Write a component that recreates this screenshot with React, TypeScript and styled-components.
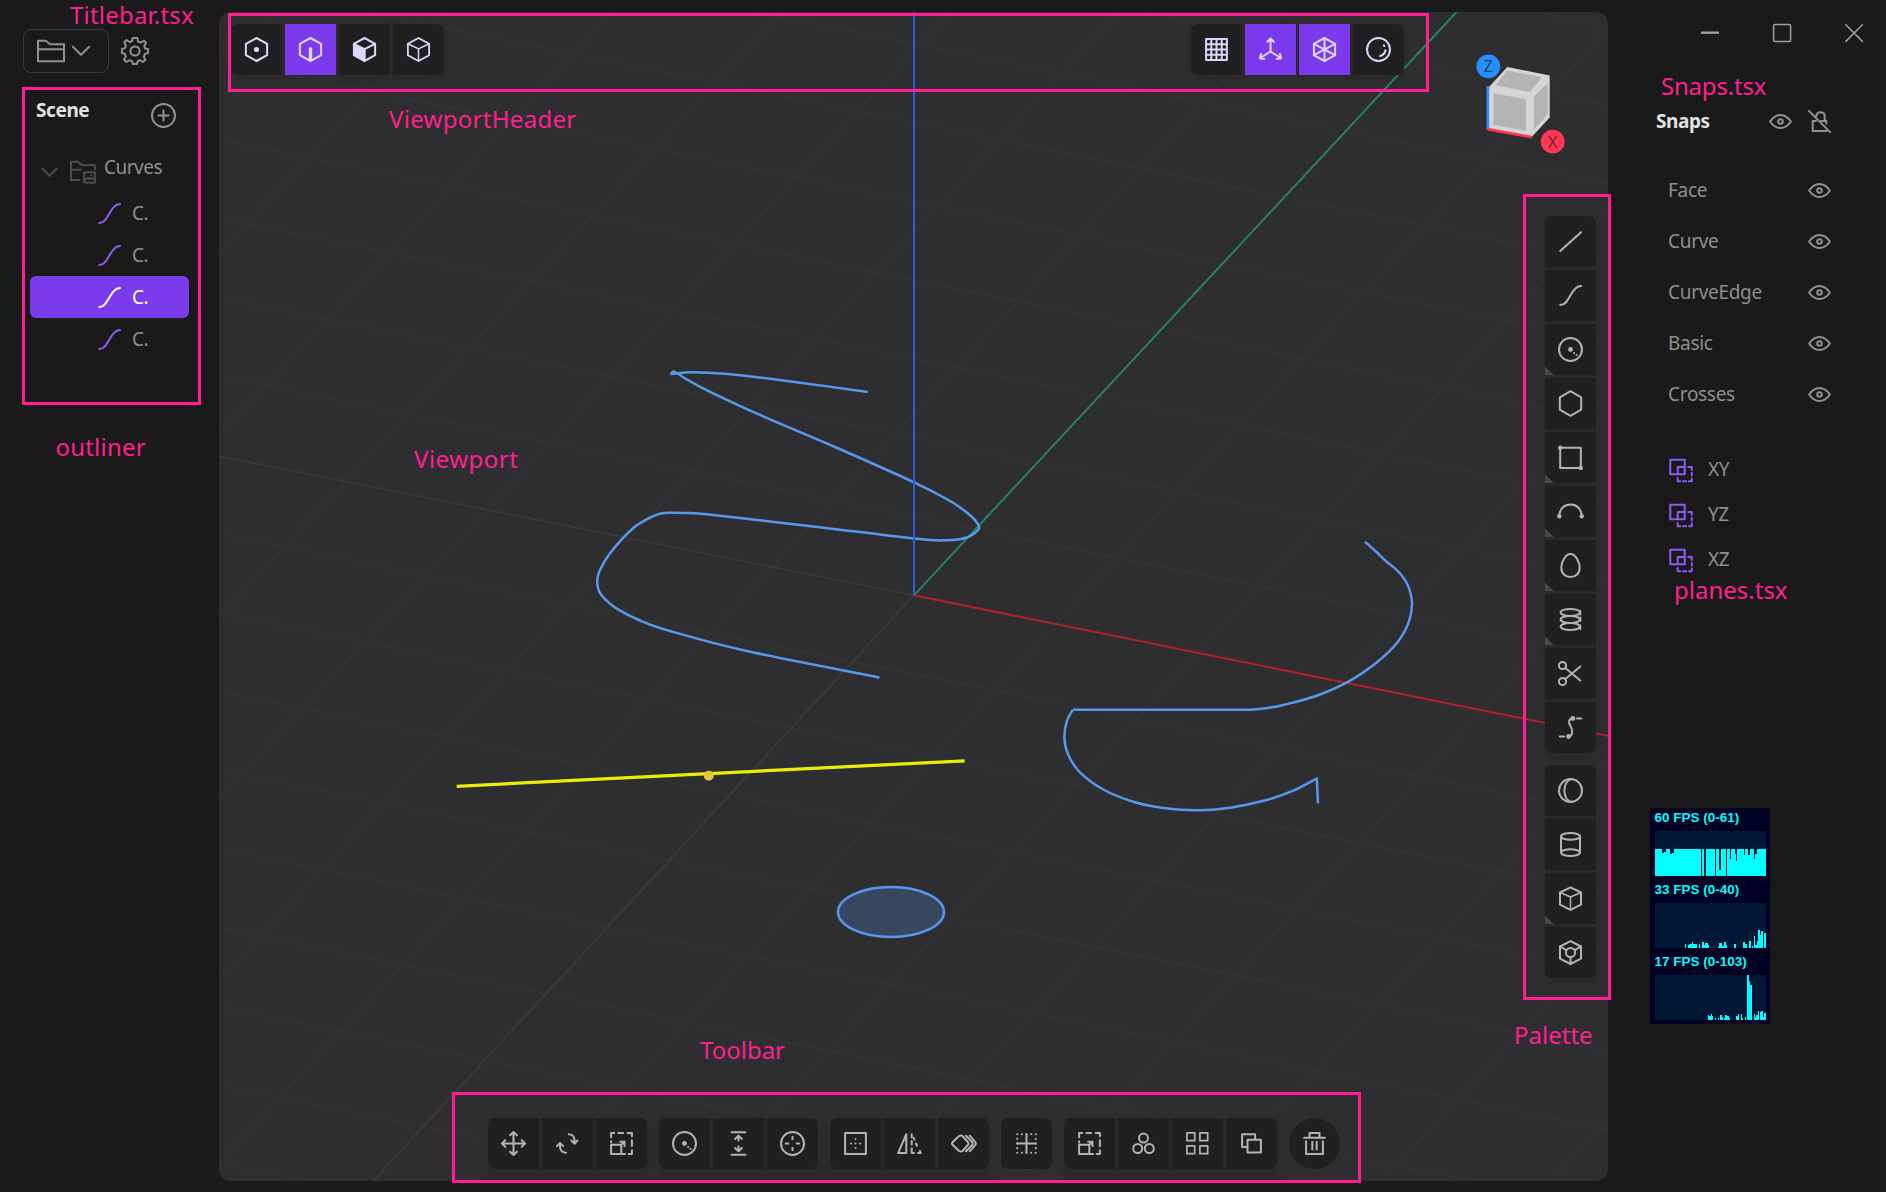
import React from "react";
import styled, { createGlobalStyle, css } from "styled-components";

const GlobalStyle = createGlobalStyle`
  *, *::before, *::after { box-sizing: border-box; }
  body {
    margin: 0;
    background: #1a1a1a;
    color: #8f8f8f;
    font-family: "Noto Sans", "Open Sans", sans-serif;
    font-size: 19px;
    overflow: hidden;
  }
`;

/* ---------- layout ---------- */

const Shell = styled.div`
  position: relative;
  display: grid;
  grid-template-columns: 219px 1389px 278px;
  width: 1886px;
  height: 1192px;
  background: #1a1a1a;
`;

const LeftPanel = styled.aside`
  display: flex;
  flex-direction: column;
  padding: 29px 30px 0 23px;
`;

const RightPanel = styled.aside`
  display: flex;
  flex-direction: column;
  padding-top: 15px;
`;

const ViewportPane = styled.main`
  position: relative;
  display: flex;
  flex-direction: column;
  height: 1169px;
  margin-top: 12px;
  border-radius: 12px;
  background: #2e2e30;
  overflow: hidden;
`;

const Canvas = styled.svg`
  position: absolute;
  inset: 0;
  width: 100%;
  height: 100%;
`;

/* ---------- icons ---------- */

const Glyph = styled.svg<{ $size?: number; $weight?: number }>`
  flex: none;
  display: block;
  width: ${(p) => p.$size ?? 27}px;
  height: ${(p) => p.$size ?? 27}px;
  overflow: visible;
  fill: none;
  stroke: currentColor;
  stroke-width: ${(p) => p.$weight ?? 2};
  stroke-linecap: round;
  stroke-linejoin: round;
  .solid { fill: currentColor; stroke: none; }
`;

const Icon = ({ children, size = 27, weight }: { children: React.ReactNode; size?: number; weight?: number }) => (
  <Glyph $size={size} $weight={weight} viewBox={`${-size / 2} ${-size / 2} ${size} ${size}`}>
    {children}
  </Glyph>
);

const HEX = "M0-11.5 10.6-5.7V5.7L0 11.5-10.6 5.7V-5.7Z";

const Vertex = <><path d={HEX} /><circle className="solid" r="2.6" /></>;
const Edge = <><path d={HEX} /><path d="M0-.8V10" strokeWidth="3.4" /></>;
const Face = <><path d={HEX} /><path d="M-10.6-5.7 0-.4 10.6-5.7" /><path className="solid" d="M-10.8-5.9 0-.4 1.2-.8V11.8H0L-10.8 5.9Z" /></>;
const Cube = <><path d={HEX} strokeWidth="1.8" /><path d="M-10.6-5.7 0-.6 10.6-5.7M0-.6V11.5" strokeWidth="1.5" /></>;
const Grid = <path d="M-10.4-10.4H10.4V10.4H-10.4ZM-5.2-10.4V10.4M0-10.4V10.4M5.2-10.4V10.4M-10.4-5.2H10.4M-10.4 0H10.4M-10.4 5.2H10.4" />;
const Axes = <path d="M0 2V-10.5M-3.2-7.7 0-11 3.2-7.7M0 2-10.2 8.5M-9.5 4.5-10.5 8.7-6.2 9.4M0 2 10.2 8.5M9.5 4.5 10.5 8.7 6.2 9.4" />;
const Xray = <><path d={HEX} /><path d="M0-11.5V11.5M-10.6-5.7 10.6 5.7M-10.6 5.7 10.6-5.7" /></>;
const Shaded = <><circle r="11.5" /><path d="M7 .8A7.5 7.5 0 0 1 1.5 6.6" /><path d="M5.4-4.1 5.7-3.5" /></>;

const Line = <path d="M-10.3 9.5 10.5-9.3" />;
const Curve = <path d="M-10.3 9.6C-.8 9.6 .4-9.4 10.6-9.4" />;
const CircleI = <><circle r="11.5" /><circle className="solid" r="2.4" /><path d="M3.6 3.4h.1M6 5.6h.1" /></>;
const Polygon = <path d="M0-12.3 10.7-6.2V6.2L0 12.3-10.7 6.2V-6.2Z" />;
const Rect = <><path d="M-10.3-9.8H10.3V10.5H-10.3Z" /><circle className="solid" cx="-10.3" cy="-9.8" r="2.2" /><circle className="solid" cx="10.3" cy="10.5" r="2.2" /></>;
const Arc = <><path d="M-11.2 4.5C-11-2.8-6-7 0-7S11-2.8 11.2 4.5" /><circle className="solid" cx="-11.2" cy="4.8" r="2.2" /><circle className="solid" cx="11.2" cy="4.8" r="2.2" /></>;
const Egg = <path d="M0-11.6C5-11.6 9.2-3.5 9.2 2.3 9.2 8 5.2 11.6 0 11.6S-9.2 8-9.2 2.3C-9.2-3.5-5-11.6 0-11.6Z" />;
const Coil = <><ellipse cx="-.3" cy="-7.1" rx="9.6" ry="3.5" /><ellipse cx="-.3" cy="0" rx="9.6" ry="3.5" /><ellipse cx="-.3" cy="7" rx="9.6" ry="3.5" /><path d="M9.8-8.5V-5M9.8-2V1.5M9.8 6V9.5" /></>;
const Scissors = <><circle cx="-8" cy="-8" r="3.6" /><circle cx="-8" cy="8" r="3.6" /><path d="M-5.2-5.4 9.8 7M-5.2 5.4 9.8-7" /></>;
const Bridge = <><path d="M2.2-9C-2-8.8-2.6-5 .2-1 2.8 3 2.2 8.6-2 9" /><path d="M6.5-9H10.8M-10.8 9H-6.5" /><circle className="solid" cx="2.4" cy="-9" r="2.4" /><circle className="solid" cx="-2" cy="9" r="2.4" /></>;
const Sphere = <><circle r="11.5" /><path d="M1-11.4C-8.5-9-8.5 9 1 11.4" /></>;
const Cylinder = <><ellipse cy="-8.1" rx="9.5" ry="3.4" /><ellipse cy="8.1" rx="9.5" ry="3.4" /><path d="M-9.5-8.1V8.1M9.5-8.1V8.1" /></>;
const Box = <><path d="M0-11.1 10.5-6V6.1L0 11.3-10.5 6.1V-6Z" /><path d="M-10.5-6 0-1.5 10.5-6M0-1.5V11.3" strokeWidth="1.5" /></>;
const Boolean3D = <><path d="M0-11.4 10.5-6V6.1L0 11.5-10.5 6.1V-6Z" /><circle r="4.6" /><path d="M-10.5-6-4.2-2.3M10.5-6 4.2-2.3M0 4.8V11.5" /></>;

const Move = <path d="M0-11.3V11.3M-11.3 0H11.3M-3.4-8.2 0-11.5 3.4-8.2M-3.4 8.2 0 11.5 3.4 8.2M-8.2-3.4-11.5 0-8.2 3.4M8.2-3.4 11.5 0 8.2 3.4" />;
const Rotate = <path d="M1.3-9.2C5.5-9.4 7.6-6 7.1-.5M3.8-3 7.1.2 10-3M-1.5 9.2C-6 9.4-8 6-7.5.3M-10.6 2.6-7.5-.5-4.3 2.6" />;
const ScaleI = <path d="M-10.4-6.3V-10.4H-7.3M-3.2-10.4H1.6M6.2-10.4H10.4V-7.3M10.4-3.2V2.6M10.4 6.8V10.4H7.2M3.5 10.4H1M-10.4 1.2H-.2V10.4H-10.4ZM-10.4-2.3V-1M-1.4-1.8H3V2.5M3-1.8-.2 1.2" />;
const Offset = <path d="M-7-11.2H7M-7 11.2H7M0-7.8V-3M0 3V7.8M-3.4-4.5 0-7.9 3.4-4.5M-3.4 4.5 0 7.9 3.4 4.5" />;
const Target = <><circle r="11.5" /><path d="M0-6.8V-4.2M0 4.2V6.8M-6.8 0H-4.2M4.2 0H6.8" /></>;
const Snap = <><path d="M-10.4-10.4H10.4V10.4H-10.4Z" /><path d="M-4.5 0h.1M4.5 0h.1M0-4.5v.1M0 4.5v.1M0 0h.1" /></>;
const Mirror = <><path d="M-3.2-9.3V9.6H-11.4Z" /><path d="M2.2-9.3V-6M2.2-2.5V1M2.2 5V9.6H4.5M4.2-5.6 4.9-3.8M6.5 0 7.5 2.3M8.6 9.6H11.2L10.4 7.4" /></>;
const Trim = <path d="M-4.4-7.5-11.2-1.1Q-11.8 0-11.2 1.1L-4.4 7.5Q-2.6 8.7-1 7.5L4.6 1.2Q5.3 0 4.6-1.2L-1-7.5Q-2.6-8.7-4.4-7.5ZM2.5-7.8 8.8-1.2Q9.4 0 8.8 1.2L2.5 7.8M6.2-7.8 12-1.2Q12.6 0 12 1.2L6.2 7.8" />;
const GridSnap = <><path d="M0-9.3V9.3M-9.3 0H9.3" /><path d="M-9.3-9.3H9.3V9.3H-9.3Z" strokeDasharray=".1 4.55" strokeWidth="2.1" /></>;
const Radial = <><circle cy="-5.4" r="4.5" /><circle cx="-5.8" cy="5" r="4.5" /><circle cx="5.8" cy="5" r="4.5" /></>;
const Array4 = <path strokeWidth="1.7" d="M-10.6-10.6H-2.8V-2.8H-10.6ZM2.4-10.6H10.2V-2.8H2.4ZM-10.6 2.3H-2.8V10.2H-10.6ZM2.4 2.3H10.2V10.2H2.4Z" />;
const Duplicate = <path d="M3.6-4.2V-9.2H-9.4V3.5H-4.6M-4-3.7H9.4V9.1H-4Z" />;
const Trash = <path d="M-10.4-5.8H10.4M-5-6.4V-10.4H5V-6.4M-8.4-2.2V10.4H8.4V-2.2M-2.2-1.8V6M2.2-1.8V6" />;

const EyeIcon = () => (
  <Icon><path d="M-10.4 0C-7.4-4.4-4-6.6 0-6.6S7.4-4.4 10.4 0C7.4 4.4 4 6.6 0 6.6S-7.4 4.4-10.4 0Z" /><circle r="2.3" /></Icon>
);

/* ---------- tool buttons ---------- */

const ToolButton = styled.button<{ $active?: boolean; $tone?: "violet" | "grey"; $menu?: boolean; $round?: boolean }>`
  display: grid;
  place-items: center;
  width: 51px;
  height: 51px;
  padding: 0;
  border: 0;
  color: ${(p) => (p.$tone === "violet" ? "#ddd6fe" : "#b4b4b4")};
  background: ${(p) => (p.$active ? "#7c3aed" : "#202020")};
  ${(p) => p.$menu && css`
    background: linear-gradient(45deg, #4a4a4a 6px, #202020 6.4px);
  `}
  ${(p) => p.$round && css`border-radius: 50% !important;`}
`;

const ToolGroup = styled.div<{ $vertical?: boolean }>`
  display: flex;
  flex-direction: ${(p) => (p.$vertical ? "column" : "row")};
  gap: 3px;
  border-radius: 7px;
  box-shadow: 0 6px 12px rgba(0, 0, 0, 0.1);
  background: #2a2a2b;
  > :first-child { border-radius: ${(p) => (p.$vertical ? "7px 7px 0 0" : "7px 0 0 7px")}; }
  > :last-child { border-radius: ${(p) => (p.$vertical ? "0 0 7px 7px" : "0 7px 7px 0")}; }
  > :only-child { border-radius: 7px; }
  &:has(> :only-child) { background: none; box-shadow: none; }
`;

const HeaderBar = styled.header`
  position: relative;
  display: flex;
  align-items: flex-start;
  height: 63px;
  padding: 12px 0 0 12px;
`;

const Spacer = styled.div`flex: 1;`;

const PaletteColumn = styled.nav`
  position: relative;
  flex: 1;
  display: flex;
  flex-direction: column;
  justify-content: center;
  align-items: flex-end;
  gap: 12px;
  padding: 1px 12px 0 0;
`;

const BottomBar = styled.footer`
  position: relative;
  display: flex;
  justify-content: center;
  gap: 12px;
  height: 63px;
  padding-left: 1px;
`;

const NavCube = styled.svg`
  flex: none;
  width: 204px;
  height: 156px;
  margin-top: -12px;
`;

type Tool = { icon: React.ReactNode; active?: boolean; menu?: boolean };

const Tools = ({ tools, tone = "grey", vertical }: { tools: Tool[]; tone?: "violet" | "grey"; vertical?: boolean }) => (
  <ToolGroup $vertical={vertical}>
    {tools.map((t, i) => (
      <ToolButton key={i} $tone={tone} $active={t.active} $menu={t.menu}>
        <Icon>{t.icon}</Icon>
      </ToolButton>
    ))}
  </ToolGroup>
);

/* ---------- scene drawing ---------- */

type Pt = [number, number];

// Catmull-Rom spline through the points, written as cubic segments.
const spline = (pts: Pt[]) => {
  let d = `M${pts[0][0]} ${pts[0][1]}`;
  for (let i = 0; i < pts.length - 1; i++) {
    const a = pts[i - 1] ?? pts[i];
    const b = pts[i];
    const c = pts[i + 1];
    const e = pts[i + 2] ?? c;
    d += `C${b[0] + (c[0] - a[0]) / 6} ${b[1] + (c[1] - a[1]) / 6} ${c[0] - (e[0] - b[0]) / 6} ${c[1] - (e[1] - b[1]) / 6} ${c[0]} ${c[1]}`;
  }
  return d;
};

const zigzagTop: Pt[] = [[867.7, 392], [800, 382.7], [740, 375.3], [708, 372.8], [686, 372.4], [670.5, 374]];
const zigzag: Pt[] = [
  [674, 371], [678.5, 374.3], [703, 388.3], [757, 413.6], [835, 447], [914, 482.3], [953, 502.7], [971.7, 516.7], [977.8, 524], [978.5, 529.5],
  [966.7, 537.5], [946.7, 540.3], [914, 538.5], [806.7, 525.7], [706.7, 514.3], [684, 512.9], [670, 512.7], [660, 513.7], [650, 517.6], [633, 528.3],
  [610, 553.3], [599.5, 571], [597.2, 582], [599.3, 591.7], [606, 600], [616.7, 608.6], [640, 620.5], [670, 631], [746.7, 651], [879.5, 677.5],
];
const hookUpper: Pt[] = [
  [1365, 541.7], [1376, 551.5], [1386.7, 561.7], [1394, 567.6], [1400.5, 574], [1405.5, 580.8], [1409.5, 589.5], [1412, 603.3], [1408.3, 623.3], [1396.7, 643.3], [1376.7, 662.5],
  [1348.3, 681.7], [1316.7, 695.7], [1283.3, 705], [1266, 708.2], [1250, 709.7],
];
const hookLower: Pt[] = [
  [1072.7, 709.7], [1066.7, 721.7], [1064.4, 738.3], [1068.3, 755], [1080, 772.3], [1103.3, 789.5], [1133.3, 801.7], [1163.3, 808],
  [1196.7, 810.3], [1230, 807.7], [1266.7, 800], [1293.3, 790.7], [1316.8, 778.5],
];

const OX = 914;
const OY = 595.3;
const U = 0.2022;
const V = 0.928;
const along = Array.from({ length: 21 }, (_, i) => i - 10).filter((n) => n);

const Scene = () => (
  <Canvas viewBox="219 12 1389 1169">
    <g stroke="#333335" strokeWidth="1.5">
      {along.map((n) => (
        <line key={`u${n}`} x1={219} x2={1608} y1={OY + n * 78.8 - (OX - 219) * U} y2={OY + n * 78.8 + (1608 - OX) * U} />
      ))}
      {along.map((n) => (
        <line key={`v${n}`} y1={12} y2={1181} x1={OX + n * 168.6 + (OY - 12) * V} x2={OX + n * 168.6 - (1181 - OY) * V} />
      ))}
    </g>
    <path d={`M${OX} ${OY}L219 456M${OX} ${OY}L373 1181`} stroke="#3a3a3c" strokeWidth="1.6" fill="none" />
    <path d={`M${OX} ${OY}L1456.5 12`} stroke="#258766" strokeWidth="1.9" />
    <path d={`M${OX} ${OY}L1608 735.8`} stroke="#b3202d" strokeWidth="2.1" />
    <g fill="none" stroke="#5899ee" strokeWidth="2.5" strokeLinejoin="round">
      <path d={spline(zigzagTop)} />
      <path d={`M670.5 374L674 371`} />
      <path d={spline(zigzag)} />
      <path d={spline(hookUpper) + "H1072.7"} />
      <path d={spline(hookLower) + "L1318 803.5"} />
      <ellipse cx="891" cy="912" rx="53" ry="25" fill="#36475f" />
    </g>
    <path d={`M${OX} ${OY}V12`} stroke="#2b5fd9" strokeWidth="2" />
    <path d="M456.7 786.3 964.7 760.8" stroke="#ecec0a" strokeWidth="3.2" />
    <circle cx="708.8" cy="775.7" r="5" fill="#e3c541" />
  </Canvas>
);

const CubeLetter = styled.text`
  font: 16px "Noto Sans", sans-serif;
  text-anchor: middle;
`;

const ViewCube = () => (
  <NavCube viewBox="1404 12 204 156">
    <path d="M1507.3 67 1549.7 75.5V117.5L1531.7 137 1489 128.5V87Z" fill="#d5d5d5" />
    <path d="M1507.3 70.5 1542 77.3 1529.7 92 1495.7 85.3ZM1493.3 93.3 1526 99.3V131L1493.3 124.7ZM1533.7 97 1547.7 82.7V114.3L1533.7 130Z" fill="#b4b4b4" />
    <path d="M1487.8 86V129.5" stroke="#2a8dff" strokeWidth="2.8" />
    <path d="M1487.5 129.2 1531.7 137.2" stroke="#ff3755" strokeWidth="2.8" />
    <circle cx="1488.3" cy="66.3" r="11.9" fill="#2a8dff" />
    <circle cx="1552.7" cy="141.7" r="11.9" fill="#ff3755" />
    <CubeLetter x="1488.3" y="72.3" fill="#123f73">Z</CubeLetter>
    <CubeLetter x="1552.7" y="147.6" fill="#7c1b29">X</CubeLetter>
  </NavCube>
);

const Viewport = () => (
  <ViewportPane>
    <Scene />
    <HeaderBar>
      <Tools tone="violet" tools={[{ icon: Vertex }, { icon: Edge, active: true }, { icon: Face }, { icon: Cube }]} />
      <Spacer />
      <Tools tone="violet" tools={[{ icon: Grid }, { icon: Axes, active: true }, { icon: Xray, active: true }, { icon: Shaded }]} />
      <ViewCube />
    </HeaderBar>
    <PaletteColumn>
      <Tools vertical tools={[
        { icon: Line }, { icon: Curve }, { icon: CircleI, menu: true }, { icon: Polygon }, { icon: Rect, menu: true },
        { icon: Arc, menu: true }, { icon: Egg, menu: true }, { icon: Coil, menu: true }, { icon: Scissors }, { icon: Bridge },
      ]} />
      <Tools vertical tools={[{ icon: Sphere }, { icon: Cylinder }, { icon: Box, menu: true }, { icon: Boolean3D }]} />
    </PaletteColumn>
    <BottomBar>
      <Tools tools={[{ icon: Move }, { icon: Rotate }, { icon: ScaleI }]} />
      <Tools tools={[{ icon: CircleI }, { icon: Offset }, { icon: Target }]} />
      <Tools tools={[{ icon: Snap }, { icon: Mirror }, { icon: Trim }]} />
      <Tools tools={[{ icon: GridSnap }]} />
      <Tools tools={[{ icon: ScaleI }, { icon: Radial }, { icon: Array4 }, { icon: Duplicate }]} />
      <ToolButton $round><Icon>{Trash}</Icon></ToolButton>
    </BottomBar>
  </ViewportPane>
);

/* ---------- left panel ---------- */

const FileRow = styled.div`
  display: flex;
  align-items: center;
  gap: 12px;
  height: 44px;
  color: #929292;
`;

const FileButton = styled.button`
  display: flex;
  align-items: center;
  gap: 6px;
  width: 86px;
  height: 44px;
  padding: 0 0 0 13px;
  border: 1px solid #3a3a3a;
  border-radius: 8px;
  background: none;
  color: inherit;
`;

const Heading = styled.h2`
  margin: 0;
  font-size: 19px;
  line-height: 26px;
  font-weight: 700;
  letter-spacing: -0.4px;
  color: #e2e2e2;
`;

const SceneHeader = styled.div`
  display: flex;
  justify-content: space-between;
  align-items: flex-start;
  height: 53px;
  margin-top: 24px;
  padding: 0 12px 0 13px;
  color: #929292;
`;

const AddButton = styled.span`margin-top: 5px;`;

const Tree = styled.ul`
  margin: 0 0 0 7px;
  padding: 0;
  list-style: none;
`;

const TreeRow = styled.li<{ $selected?: boolean }>`
  display: flex;
  align-items: center;
  gap: 9px;
  height: 42px;
  width: 159px;
  padding-left: 66px;
  border-radius: 6px;
  letter-spacing: -0.5px;
  background: ${(p) => (p.$selected ? "#7c3aed" : "transparent")};
  color: ${(p) => (p.$selected ? "#ffffff" : "#8f8f8f")};
  svg { color: ${(p) => (p.$selected ? "#ffffff" : "#8b5cf6")}; }
`;

const FolderRow = styled(TreeRow)`
  padding-left: 6px;
  gap: 6px;
  svg { color: #4c4c4c; }
`;

const FolderName = styled.span`
  margin: -8px 0 0 2px;
`;

const Left = () => (
  <LeftPanel>
    <FileRow>
      <FileButton>
        <Icon size={28}><path d="M-13-10.3H-5.2L-.8-6.8H13V10.3H-13ZM-13-1.8H13" /></Icon>
        <Icon size={20}><path d="M-8.2-4.4 0 3.8 8.2-4.4" /></Icon>
      </FileButton>
      <Icon size={28}>
        <path d="M-2.3-13.1H2.3L3.2-9.5 5.8-8.4 9-10.4 11-8 9.2-5 10-2.6 13.1-2V2L10 2.9 8.8 5.8 10.4 8.8 8 11 5.2 9.3 2.8 10.1 2 13.1H-2L-3 10.1-5.6 9.2-8.6 11-11 8.6-9.2 5.6-10 3-13.1 2V-2L-10-2.9-9-5.5-10.8-8.6-8.6-11-5.5-9-3.1-9.9Z" />
        <circle r="4.6" />
      </Icon>
    </FileRow>
    <SceneHeader>
      <Heading>Scene</Heading>
      <AddButton><Icon><circle r="11.5" /><path d="M-5 0H5M0-5V5" /></Icon></AddButton>
    </SceneHeader>
    <Tree>
      <FolderRow>
        <Icon><path d="M-7-2.8 0 4.2 7-2.8" /></Icon>
        <Icon>
          <path d="M-3 8.5H-11.5V-9.8H-4.8L-1-6.5H12.3V-2M-11.5-1.7H-1.5" />
          <path d="M1.6.8H12.4V11.2H1.6ZM1.6 9 5 6.5 7.5 7.5 9.5 6.5 12.4 8.5M8.8 3.6h.1" />
        </Icon>
        <FolderName>Curves</FolderName>
      </FolderRow>
      {[false, false, true, false].map((selected, i) => (
        <TreeRow key={i} $selected={selected}>
          <Icon>{Curve}</Icon>C.
        </TreeRow>
      ))}
    </Tree>
  </LeftPanel>
);

/* ---------- right panel ---------- */

const WindowControls = styled.div`
  display: flex;
  justify-content: flex-end;
  gap: 36px;
  height: 36px;
  padding-right: 14px;
  color: #a0a0a0;
`;

const ControlButton = styled.span`
  display: grid;
  place-items: center;
  width: 36px;
  height: 36px;
`;

const SnapHeader = styled.div`
  display: flex;
  align-items: center;
  gap: 12px;
  height: 27px;
  margin-top: 57px;
  padding: 0 53px 0 48px;
  color: #929292;
  ${Heading} { flex: 1; margin-top: -1px; }
`;

const SnapList = styled.ul`
  margin: 30px 0 0;
  padding: 0 53px 0 60px;
  list-style: none;
`;

const SnapRow = styled.li`
  display: flex;
  align-items: center;
  justify-content: space-between;
  height: 51px;
  letter-spacing: -0.3px;
  svg { color: #929292; }
`;

const RowName = styled.span`margin-top: -2px;`;

const PlaneList = styled.ul`
  margin: 26px 0 0;
  padding: 0 0 0 60px;
  list-style: none;
`;

const PlaneRow = styled.li`
  display: flex;
  align-items: center;
  gap: 13px;
  height: 45px;
  letter-spacing: -0.4px;
  svg { color: #8b5cf6; margin-top: 3px; }
`;

const StatsStack = styled.div`
  display: flex;
  flex-direction: column;
  margin: 227px 0 0 42px;
`;

const StatsCell = styled.div`
  width: 192px;
  height: 72px;
  border-radius: 6px;
  box-shadow: 0 2px 3px rgba(0, 0, 0, 0.09);
`;

const StatsPanel = styled.div`
  width: 120px;
  height: 72px;
  padding: 1px 4.5px 0;
  background: #000022;
  color: #00ffff;
  font: bold 13.5px/17px "Liberation Sans", Arial, sans-serif;
`;

const Graph = styled.svg`
  display: block;
  width: 111px;
  height: 45px;
  margin-top: 4.5px;
  background: #001836;
  fill: #00ffff;
  shape-rendering: crispEdges;
`;

type Bar = [x: number, width: number, height: number];

const stats: { label: string; bars: Bar[] }[] = [
  {
    label: "60 FPS (0-61)",
    bars: [[0, 22, 82], [22, 6, 70], [28, 5, 73], [33, 11, 82], [44, 8, 66], [52, 4, 70], [56, 81, 82], [140, 8.5, 82], [152, 30, 82], [185, 9, 82], [194, 5, 18], [199, 14, 82], [216, 9, 82], [225, 5, 52], [230, 10, 82], [240, 3, 66], [243, 5, 46], [248, 19, 82], [267, 5, 64], [272, 9, 82], [281, 4, 64], [285, 12, 82], [297, 5, 52], [302, 4, 66], [306, 28, 82]],
  },
  {
    label: "33 FPS (0-40)",
    bars: [[90, 4, 11], [98, 4, 8], [102, 4, 12], [106, 4, 13], [110, 5, 17], [115, 5, 12], [120, 7, 13], [131, 4, 11], [140, 6, 17], [146, 5, 9], [151, 7, 14], [158, 5, 8], [190, 4, 3], [194, 9, 16], [203, 4, 6], [207, 6, 17], [213, 4, 8], [239, 4, 11], [266, 4, 17], [270, 8, 12], [284, 5, 22], [293, 3, 5], [297, 5, 36], [302, 4, 10], [306, 4, 20], [310, 5, 54], [315, 4, 40], [319, 6, 52], [329, 5, 44]],
  },
  {
    label: "17 FPS (0-103)",
    bars: [[158, 5, 16], [163, 4, 11], [167, 5, 18], [172, 4, 12], [180, 4, 7], [189, 4, 7], [197, 5, 16], [202, 4, 8], [207, 4, 7], [211, 5, 16], [216, 6, 12], [222, 4, 6], [243, 6, 12], [249, 5, 18], [258, 5, 18], [263, 3, 6], [270, 4, 10], [278, 5, 135], [283, 4, 116], [287, 5, 105], [297, 4, 18], [301, 4, 8], [305, 5, 14], [310, 4, 28], [315, 4, 24], [319, 5, 26], [324, 5, 10], [329, 5, 20]],
  },
];

const Right = () => (
  <RightPanel>
    <WindowControls>
      <ControlButton><Icon size={20} weight={2.4}><path d="M-9-.3H9" strokeLinecap="butt" /></Icon></ControlButton>
      <ControlButton><Icon size={20} weight={1.5}><rect x="-8.4" y="-8.4" width="17" height="17" rx="1.5" /></Icon></ControlButton>
      <ControlButton><Icon size={20} weight={1.5}><path d="M-8.2-8.2 8.4 8.4M8.4-8.2-8.2 8.4" /></Icon></ControlButton>
    </WindowControls>
    <SnapHeader>
      <Heading>Snaps</Heading>
      <EyeIcon />
      <Icon><path d="M-10.6-10.6 10.6 10.6M-3.5-.4H-6.8V9.6H7M1.5-.4H6.8V2M-3.2-5.6C-3-8-1.6-9.2 1-9.2 4-9.2 5.2-7.5 5.2-5V-.4" /></Icon>
    </SnapHeader>
    <SnapList>
      {["Face", "Curve", "CurveEdge", "Basic", "Crosses"].map((name) => (
        <SnapRow key={name}><RowName>{name}</RowName><EyeIcon /></SnapRow>
      ))}
    </SnapList>
    <PlaneList>
      {["XY", "YZ", "XZ"].map((name) => (
        <PlaneRow key={name}>
          <Icon>
            <path d="M-11.2-10.7H3.2V3.7H-11.2ZM3.2-3.6H-3.8V3.7" />
            <path d="M6.8-3.6H10.3V-.6M10.3 2.6V5M10.3 8V10.7H7.5M4.6 10.7H1.5M-1.2 10.7H-3.8V7.5" />
          </Icon>
          {name}
        </PlaneRow>
      ))}
    </PlaneList>
    <StatsStack>
      {stats.map(({ label, bars }) => (
        <StatsCell key={label}>
          <StatsPanel>
            {label}
            <Graph viewBox="0 0 334 135" preserveAspectRatio="none">
              {bars.map(([x, w, h]) => <rect key={x} x={x} y={135 - h} width={w} height={h} />)}
            </Graph>
          </StatsPanel>
        </StatsCell>
      ))}
    </StatsStack>
  </RightPanel>
);

/* ---------- annotations over the interface ---------- */

const Frame = styled.div<{ $x: number; $y: number; $w: number; $h: number }>`
  position: absolute;
  left: ${(p) => p.$x}px;
  top: ${(p) => p.$y}px;
  width: ${(p) => p.$w}px;
  height: ${(p) => p.$h}px;
  border: 3px solid #ff1f93;
  pointer-events: none;
`;

const Note = styled.span<{ $x: number; $base: number; $track?: number }>`
  position: absolute;
  left: ${(p) => p.$x}px;
  top: ${(p) => p.$base - 25}px;
  font-size: 24px;
  line-height: 32px;
  letter-spacing: ${(p) => p.$track ?? 0}px;
  color: #ff1f93;
  white-space: nowrap;
`;

export default function App() {
  return (
    <>
      <GlobalStyle />
      <Shell>
        <Left />
        <Viewport />
        <Right />
        <Frame $x={228} $y={13} $w={1201} $h={79} />
        <Frame $x={22} $y={87} $w={179} $h={318} />
        <Frame $x={1523} $y={194} $w={88} $h={806} />
        <Frame $x={452} $y={1092} $w={909} $h={91} />
        <Note $x={70} $base={24} $track={0.2}>Titlebar.tsx</Note>
        <Note $x={389} $base={128} $track={0.3}>ViewportHeader</Note>
        <Note $x={414} $base={468} $track={0.5}>Viewport</Note>
        <Note $x={55.5} $base={456} $track={0.2}>outliner</Note>
        <Note $x={1661} $base={95} $track={-0.2}>Snaps.tsx</Note>
        <Note $x={1674} $base={599}>planes.tsx</Note>
        <Note $x={1514} $base={1044}>Palette</Note>
        <Note $x={700} $base={1059}>Toolbar</Note>
      </Shell>
    </>
  );
}
